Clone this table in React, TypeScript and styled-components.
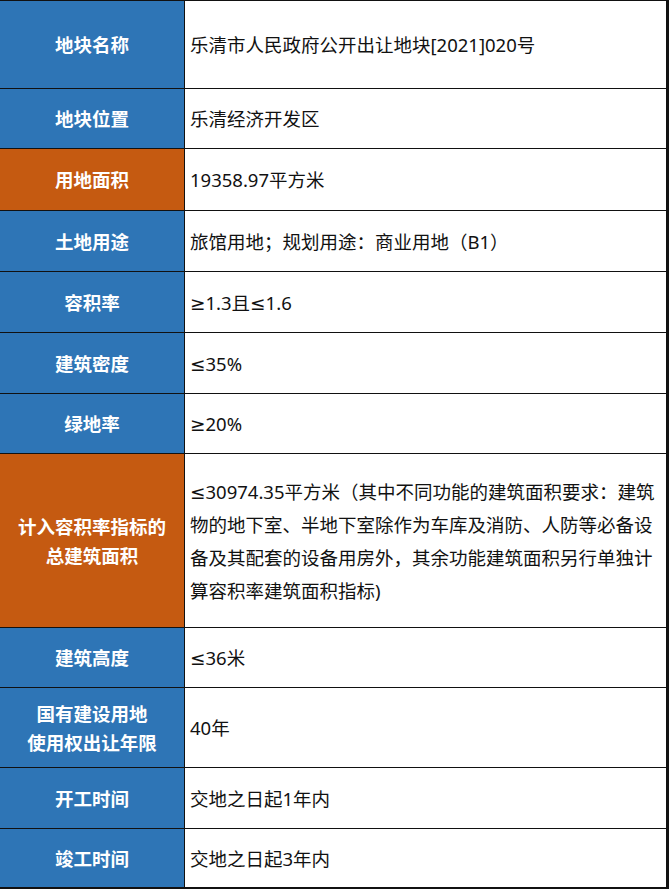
import styled, { createGlobalStyle } from "styled-components";

const GlobalStyle = createGlobalStyle`
    html, body {
        margin: 0;
        padding: 0;
        background: #ffffff;
    }
    body {
        font-family: "Noto Sans", "DejaVu Sans", "Noto Sans CJK SC", sans-serif;
    }
`

const colors = {
    blue: "#2e75b6",
    orange: "#c55a11",
    line: "#111111",
};

const StyledTable = styled.div`
    display: flex;
    flex-direction: column;
    width: 669px;
    box-sizing: border-box;
    border-top: 1px solid ${colors.line};
    border-right: 3px solid ${colors.line};
    border-bottom: 2px solid ${colors.line};
`

const StyledRow = styled.div<{ $h: number }>`
    display: grid;
    grid-template-columns: 185px 1fr;
    height: ${(p) => p.$h}px;
    box-sizing: border-box;
    border-bottom: 1.5px solid ${colors.line};

    &:last-child {
        border-bottom: none;
    }
`

const StyledLabel = styled.div<{ $accent?: boolean }>`
    display: flex;
    align-items: center;
    justify-content: center;
    text-align: center;
    background-color: ${(p) => (p.$accent ? colors.orange : colors.blue)};
    color: #ffffff;
    font-size: 18.5px;
    font-weight: 700;
    line-height: 29px;
    border-right: 1.5px solid ${colors.line};
`

const StyledValue = styled.div`
    display: flex;
    align-items: center;
    padding: 0 4px 0 5px;
    color: #111111;
    font-size: 18.5px;
    line-height: 33px;
    min-width: 0;
`

type Item = {
    label: React.ReactNode;
    value: React.ReactNode;
    h: number;
    accent?: boolean;
};

const items: Item[] = [
    { label: "地块名称", value: "乐清市人民政府公开出让地块[2021]020号", h: 88 },
    { label: "地块位置", value: "乐清经济开发区", h: 60 },
    { label: "用地面积", value: "19358.97平方米", h: 62, accent: true },
    { label: "土地用途", value: "旅馆用地；规划用途：商业用地（B1）", h: 61 },
    { label: "容积率", value: "≥1.3且≤1.6", h: 61 },
    { label: "建筑密度", value: "≤35%", h: 61 },
    { label: "绿地率", value: "≥20%", h: 60 },
    {
        label: <>计入容积率指标的<br />总建筑面积</>,
        value: (
            <span>
                ≤30974.35平方米（其中不同功能的建筑面积要求：建筑<br />
                物的地下室、半地下室除作为车库及消防、人防等必备设<br />
                备及其配套的设备用房外，其余功能建筑面积另行单独计<br />
                算容积率建筑面积指标)
            </span>
        ),
        h: 174,
        accent: true,
    },
    { label: "建筑高度", value: "≤36米", h: 60 },
    { label: <>国有建设用地<br />使用权出让年限</>, value: "40年", h: 80 },
    { label: "开工时间", value: "交地之日起1年内", h: 61 },
    { label: "竣工时间", value: "交地之日起3年内", h: 58 },
];

const App = () => {
    return (
        <>
            <GlobalStyle />
            <StyledTable>
                {items.map((item, i) => (
                    <StyledRow key={i} $h={item.h}>
                        <StyledLabel $accent={item.accent}>{item.label}</StyledLabel>
                        <StyledValue>{item.value}</StyledValue>
                    </StyledRow>
                ))}
            </StyledTable>
        </>
    );
};

export default App;
